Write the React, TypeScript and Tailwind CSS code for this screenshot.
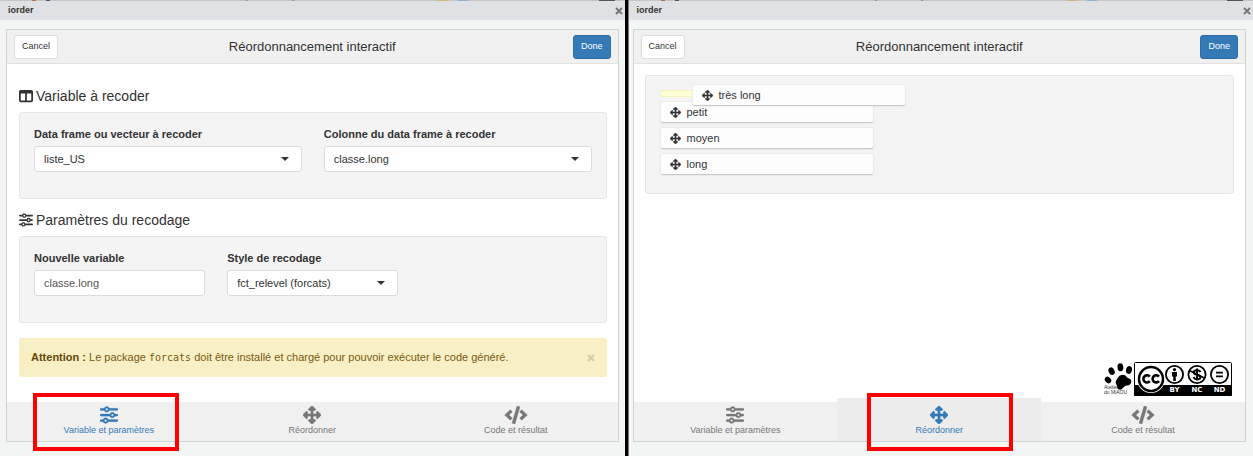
import type { ReactNode } from "react";
import type { IconType } from "react-icons";
import { FaArrowsAlt, FaCode } from "react-icons/fa";
import { FaSliders, FaTableColumns } from "react-icons/fa6";

const TABS: { label: string; icon: IconType; stroke: number; iconClass: string }[] = [
  { label: "Variable et paramètres", icon: FaSliders, stroke: 6, iconClass: "h-[18px] w-[18px]" },
  { label: "Réordonner", icon: FaArrowsAlt, stroke: 20, iconClass: "h-[18px] w-[18px]" },
  { label: "Code et résultat", icon: FaCode, stroke: 10, iconClass: "h-[18px] w-6" },
];

const Well = ({ children, className = "" }: { children: ReactNode; className?: string }) => (
  <div className={`rounded-[3px] border border-[#e6e6e6] bg-[#f4f4f4] px-3.5 ${className}`}>{children}</div>
);

const SectionTitle = ({ icon: Icon, children }: { icon: IconType; children: ReactNode }) => (
  <h4 className="flex items-center gap-[3px] text-[14px] leading-4">
    <Icon size={14} strokeWidth={0} />
    {children}
  </h4>
);

const SelectField = ({ id, label, value }: { id: string; label: string; value: string }) => (
  <div>
    <label htmlFor={id} className="mb-1 block text-[11px] leading-4 font-bold">
      {label}
    </label>
    <div className="relative">
      <select
        id={id}
        className="block h-[26px] w-full appearance-none rounded-[3px] border border-[#dcdcdc] bg-white px-[9px] text-[11px]"
      >
        <option>{value}</option>
      </select>
      <span className="pointer-events-none absolute top-[11px] right-[13px] border-x-4 border-t-4 border-x-transparent border-t-[#333]" />
    </div>
  </div>
);

const TextField = ({ id, label, value }: { id: string; label: string; value: string }) => (
  <div>
    <label htmlFor={id} className="mb-1 block text-[11px] leading-4 font-bold">
      {label}
    </label>
    <input
      id={id}
      type="text"
      defaultValue={value}
      className="block h-[26px] w-full rounded-[3px] border border-[#dcdcdc] bg-white px-[9px] text-[11px] text-[#555]"
    />
  </div>
);

const SortItem = ({ children, className = "" }: { children: ReactNode; className?: string }) => (
  <li
    className={`flex h-[22px] w-[214px] items-center gap-1.5 rounded-[3px] border border-[#ececec] border-b-[#c8c8c8] bg-[#fdfdfd] px-[9px] text-[11px] shadow-xs ${className}`}
  >
    <FaArrowsAlt size={11} strokeWidth={20} />
    {children}
  </li>
);

const PawLogo = () => (
  <svg width="29" height="33" viewBox="0 0 29 33" role="img" aria-label="Atelier du MiAOU">
    <ellipse cx="4" cy="18" rx="2.9" ry="3.6" transform="rotate(-40 4 18)" />
    <ellipse cx="7.6" cy="9.2" rx="2.9" ry="3.9" transform="rotate(-25 7.6 9.2)" />
    <ellipse cx="16.4" cy="5.2" rx="2.9" ry="4" transform="rotate(-5 16.4 5.200)" />
    <ellipse cx="25" cy="8" rx="2.9" ry="4" transform="rotate(15 25 8)" />
    <path d="M16 13.500c3-1.500 5.500-.5 6.500 1.500 1 1.500 3.500 1 4.500 3 1 3-1 5.500-4 5.500-2 0-3 1.500-5 3.500-2 1.500-5 .5-5-2.500 0-2-2-3-1-5.500.6-1.600 2-4 4-5.500z" />
    <text x="0" y="27" fontSize="5" fill="#333">
      Atelier
    </text>
    <text x="0" y="32" fontSize="5" fill="#333">
      du MiAOU
    </text>
  </svg>
);

const CreativeCommons = () => (
  <svg width="98" height="34" viewBox="0 0 98 34" role="img" aria-label="CC BY NC ND">
    <rect x="0.5" y="0.5" width="97" height="33" rx="1" fill="#fff" stroke="#000" />
    <rect x="0" y="23" width="98" height="11" rx="1" />
    <circle cx="17" cy="17" r="14" fill="#fff" />
    <circle cx="17" cy="17" r="12" fill="#fff" stroke="#000" strokeWidth="2.5" />
    <path
      d="M15.800 14.600a3.600 3.600 0 1 0 0 4.600M25 14.600a3.600 3.600 0 1 0 0 4.600"
      fill="none"
      stroke="#000"
      strokeWidth="2.600"
    />
    <g fill="#fff" stroke="#000" strokeWidth="1.800">
      <circle cx="40.500" cy="12.500" r="8.600" />
      <circle cx="63" cy="12.500" r="8.600" />
      <circle cx="85.500" cy="12.500" r="8.600" />
    </g>
    <circle cx="40.500" cy="7.600" r="1.600" />
    <path d="M38 10h5v4.500h-1.200v4.500h-2.600v-4.500H38z" />
    <path
      d="M66.500 10.200c-.6-1.600-2-2-3.500-2s-3.200.6-3.200 2.200 1.600 2 3.300 2.400 3.300 1 3.300 2.400-1.600 2.100-3.300 2.100-3-.6-3.500-2.300M63 6.500v12"
      fill="none"
      stroke="#000"
      strokeWidth="2"
    />
    <path d="M55.800 8.800l14 7" stroke="#000" strokeWidth="1.700" />
    <path d="M82 9.800h7v1.800h-7zM82 13.400h7v1.800h-7z" />
    <g
      className="font-['DejaVu_Sans',sans-serif]"
      fill="#fff"
      fontSize="7"
      fontWeight="bold"
      textAnchor="middle"
    >
      <text x="40.500" y="30">
        BY
      </text>
      <text x="63" y="30">
        NC
      </text>
      <text x="85.500" y="30">
        ND
      </text>
    </g>
  </svg>
);

const TabBar = ({ active, highlight }: { active: number; highlight: string }) => (
  <nav className="grid grid-cols-3 bg-[#f0f0f0]">
    {TABS.map(({ label, icon: Icon, stroke, iconClass }, index) => (
      <div key={label} className="relative">
        <button
          className={`flex w-full flex-col items-center pb-[5px] text-[9px] leading-3 ${
            index === active ? "text-[#337ab7]" : "text-[#777]"
          } ${index === 1 && active === 1 ? "-mt-1 bg-[#ececec] pt-2" : "pt-1"}`}
        >
          <Icon className={iconClass} strokeWidth={stroke} />
          <span>{label}</span>
        </button>
        {index === active && (
          <span
            className={`pointer-events-none absolute -top-[9px] z-10 h-[58px] w-[146px] border-4 border-[#ff0000] ${highlight}`}
          />
        )}
      </div>
    ))}
  </nav>
);

// sliver of the editor toolbar that stays visible above the gadget
const ToolbarSliver = () => (
  <div className="flex h-px shrink-0 bg-[#c4c4c4]">
    <span className="ml-8 w-1 bg-[#a9744f]" />
    <span className="ml-2.5 w-1 bg-[#555]" />
    <span className="ml-[196px] w-0.5 bg-[#6fae9c]" />
    <span className="ml-11 w-0.5 bg-[#6fae9c]" />
    <span className="ml-[144px] w-2.5 bg-[#cdb878]" />
    <span className="ml-2.5 w-2.5 bg-[#8fb0d0]" />
    <span className="mr-2.5 ml-auto w-4 bg-[#555]" />
  </div>
);

const GadgetWindow = ({
  frameClass,
  footer,
  children,
}: {
  frameClass: string;
  footer: ReactNode;
  children: ReactNode;
}) => (
  <section className="flex min-w-0 flex-col bg-[#f3f4f4]">
    <ToolbarSliver />
    <div className="flex h-[19px] items-center justify-between bg-[#e0e1e5] pr-0.5 pl-2">
      <span className="text-[9px] font-bold">iorder</span>
      <button aria-label="Fermer" className="text-[#777]">
        <svg width="8" height="8" viewBox="0 0 8 8" stroke="currentColor" strokeWidth="2">
          <path d="M1 1l6 6M7 1l-6 6" />
        </svg>
      </button>
    </div>
    <div className={`mt-[9px] mb-[14px] flex flex-1 flex-col border border-[#d2d4d4] bg-white ${frameClass}`}>
      <header className="grid h-[34px] grid-cols-[1fr_auto_1fr] items-center border-b border-[#e2e2e2] bg-[#f0f0f0] px-[7px]">
        <button className="h-6 justify-self-start rounded-[3px] border border-[#dcdcdc] bg-white px-[7px] text-[9px]">
          Cancel
        </button>
        <h1 className="text-[13px]">Réordonnancement interactif</h1>
        <button className="h-6 justify-self-end rounded-[3px] border border-[#2e6da4] bg-[#337ab7] px-[7px] text-[9px] text-white">
          Done
        </button>
      </header>
      {children}
      {footer}
    </div>
  </section>
);

const ParametersPanel = () => (
  <main className="flex-1 pt-6 pr-[11px] pb-6 pl-3">
    <SectionTitle icon={FaTableColumns}>Variable à recoder</SectionTitle>
    <Well className="mt-2 pt-[13px] pb-[26px]">
      <div className="grid grid-cols-2 gap-[22px]">
        <SelectField id="data-frame" label="Data frame ou vecteur à recoder" value="liste_US" />
        <SelectField id="column" label="Colonne du data frame à recoder" value="classe.long" />
      </div>
    </Well>
    <div className="mt-[13px]">
      <SectionTitle icon={FaSliders}>Paramètres du recodage</SectionTitle>
    </div>
    <Well className="mt-2 pt-[13px] pb-[26px]">
      <div className="grid grid-cols-3 gap-[22px]">
        <TextField id="new-variable" label="Nouvelle variable" value="classe.long" />
        <SelectField id="style" label="Style de recodage" value="fct_relevel (forcats)" />
      </div>
    </Well>
    <div
      role="alert"
      className="mt-[15px] flex h-[39px] items-center justify-between rounded-[3px] bg-[#f8efc5] px-3 text-[11px] text-[#7a5a12]"
    >
      <p>
        <strong className="text-[#66480a]">Attention :</strong> Le package{" "}
        <code className="font-['DejaVu_Sans_Mono',monospace] text-[10px]">forcats</code> doit être installé et chargé pour
        pouvoir exécuter le code généré.
      </p>
      <button aria-label="Masquer" className="text-[#d6cda6]">
        <svg width="8" height="8" viewBox="0 0 8 8" stroke="currentColor" strokeWidth="2">
          <path d="M1 1l6 6M7 1l-6 6" />
        </svg>
      </button>
    </div>
  </main>
);

const ReorderPanel = () => (
  <main className="flex flex-1 flex-col px-[11px] pt-[11px] pb-1.5">
    <Well className="pt-3.5 pb-[18px]">
      <ul className="relative flex flex-col gap-1">
        <li className="h-[7px] w-[214px] rounded-[3px] border border-[#f5f3b8] bg-[#ffffd6]" />
        <SortItem>petit</SortItem>
        <SortItem>moyen</SortItem>
        <SortItem>long</SortItem>
        {/* item being dragged */}
        <SortItem className="absolute -top-1.5 left-8">très long</SortItem>
      </ul>
    </Well>
    <div className="mt-auto flex justify-end gap-px pr-0.5">
      <PawLogo />
      <CreativeCommons />
    </div>
  </main>
);

export default function App() {
  return (
    <div className="grid min-h-screen grid-cols-[1fr_4px_1fr] bg-[#f3f4f4] font-['Liberation_Sans',Arial,sans-serif] text-[#333]">
      <GadgetWindow frameClass="ml-1.5 mr-1.5" footer={<TabBar active={0} highlight="left-[26px]" />}>
        <ParametersPanel />
      </GadgetWindow>
      <div className="border-r border-[#777] bg-black" />
      <GadgetWindow frameClass="ml-1 mr-[7px]" footer={<TabBar active={1} highlight="left-[30px]" />}>
        <ReorderPanel />
      </GadgetWindow>
    </div>
  );
}
